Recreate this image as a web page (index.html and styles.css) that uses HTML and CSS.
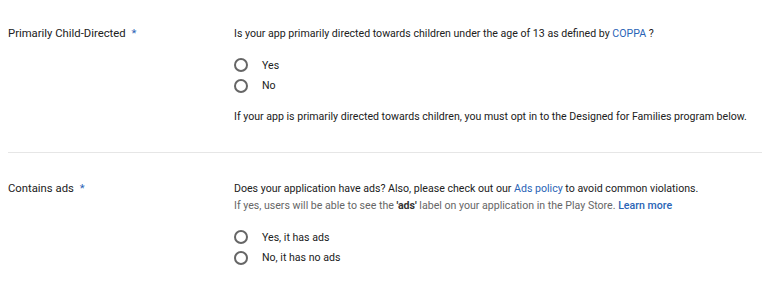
FILE: index.html
```html
<!DOCTYPE html>
<html lang="en">

<head>
    <meta charset="UTF-8">
    <meta name="viewport" content="width=device-width, initial-scale=1.0">
    <title>Content rating</title>
    <link rel="stylesheet" href="styles.css">
</head>

<body>
    <div class="form">
        <div class="row">
            <div class="label">Primarily Child-Directed <span class="req">*</span></div>
            <div class="field">
                <p class="question">Is your app primarily directed towards children under the age of 13 as defined by <a href="#">COPPA</a> ?</p>
                <div class="radios">
                    <label class="radio"><span class="circle"></span>Yes</label>
                    <label class="radio"><span class="circle"></span>No</label>
                </div>
                <p class="note">If your app is primarily directed towards children, you must opt in to the Designed for Families program below.</p>
            </div>
        </div>
        <div class="row">
            <div class="label">Contains ads <span class="req">*</span></div>
            <div class="field">
                <p class="question">Does your application have ads? Also, please check out our <a href="#">Ads policy</a> to avoid common violations.</p>
                <p class="hint">If yes, users will be able to see the <b>'ads'</b> label on your application in the Play Store. <a href="#" class="more">Learn more</a></p>
                <div class="radios">
                    <label class="radio"><span class="circle"></span>Yes, it has ads</label>
                    <label class="radio"><span class="circle"></span>No, it has no ads</label>
                </div>
            </div>
        </div>
    </div>
</body>

</html>
```

FILE: styles.css
```css
body {
    margin: 0;
    background: #fff;
    font-family: Roboto, "Liberation Sans", sans-serif;
    color: #212121;
}

.form {
    padding: 0 6px 0 8px;
}

.row {
    display: grid;
    grid-template-columns: 226px 1fr;
    padding: 25px 0 27px;
}

.row + .row {
    border-top: 1px solid #e6e6e6;
    padding-top: 27px;
}

.label {
    font-size: 11.3px;
    line-height: 17px;
}

.req {
    color: #2a64b6;
    margin-left: 3px;
}

.field p {
    margin: 0;
    font-size: 10.6px;
    line-height: 17px;
}

.hint {
    color: #666;
}

.hint b {
    color: #333;
}

a {
    color: #2a64b6;
    text-decoration: none;
}

.more {
    font-weight: 500;
}

.radios {
    margin: 13px 0 12px;
}

.radio {
    display: flex;
    align-items: center;
    height: 20.5px;
    font-size: 10.6px;
}

.circle {
    width: 10px;
    height: 10px;
    border: 2px solid #666;
    border-radius: 50%;
    margin-right: 14px;
}
```
